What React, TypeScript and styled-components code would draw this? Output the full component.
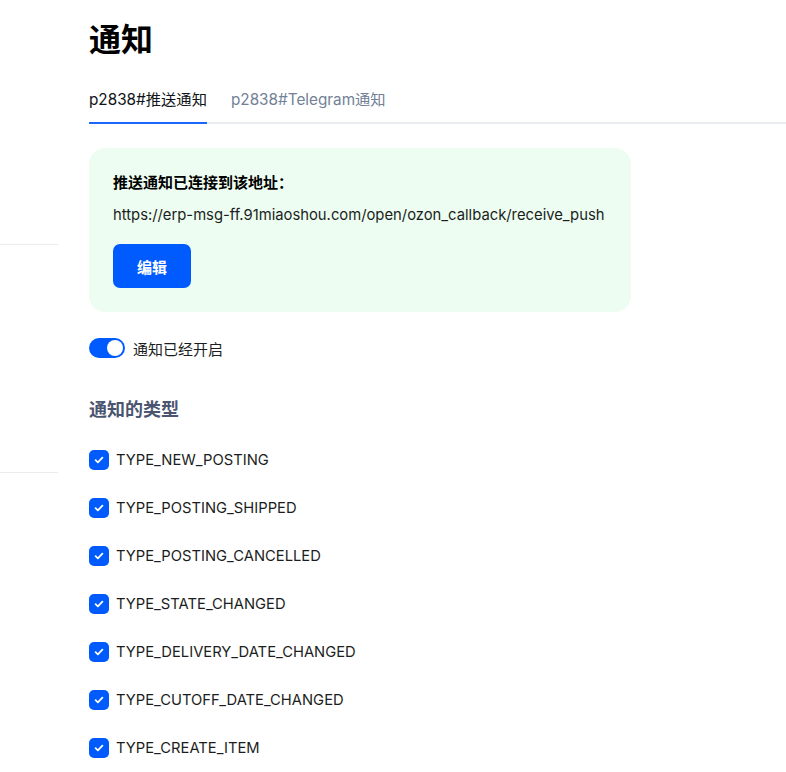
import { createGlobalStyle, styled } from 'styled-components';

const types = [
  'TYPE_NEW_POSTING',
  'TYPE_POSTING_SHIPPED',
  'TYPE_POSTING_CANCELLED',
  'TYPE_STATE_CHANGED',
  'TYPE_DELIVERY_DATE_CHANGED',
  'TYPE_CUTOFF_DATE_CHANGED',
  'TYPE_CREATE_ITEM',
];

export default function App() {
  return (
    <>
      <GlobalStyle />
      <Layout>
        <Sidebar>
          <SideBlock $height={245} />
          <SideBlock $height={228} />
        </Sidebar>
        <Main>
          <Title>通知</Title>
          <Tabs>
            <Tab $active>p2838#推送通知</Tab>
            <Tab>p2838#Telegram通知</Tab>
          </Tabs>
          <Card>
            <CardTitle>推送通知已连接到该地址：</CardTitle>
            <Url>https://erp-msg-ff.91miaoshou.com/open/ozon_callback/receive_push</Url>
            <Button>编辑</Button>
          </Card>
          <ToggleRow>
            <Toggle>
              <Knob />
            </Toggle>
            <span>通知已经开启</span>
          </ToggleRow>
          <SectionTitle>通知的类型</SectionTitle>
          <CheckList>
            {types.map((t) => (
              <CheckRow key={t}>
                <CheckBox>
                  <svg width="12" height="12" viewBox="0 0 12 12" fill="none">
                    <path
                      d="M2.6 6.2l2.3 2.2 4.5-4.7"
                      stroke="#fff"
                      strokeWidth="1.8"
                      strokeLinecap="round"
                      strokeLinejoin="round"
                    />
                  </svg>
                </CheckBox>
                <span>{t}</span>
              </CheckRow>
            ))}
          </CheckList>
        </Main>
      </Layout>
    </>
  );
}

const GlobalStyle = createGlobalStyle`
  body {
    margin: 0;
    background: #fff;
    font-family: Inter, 'Noto Sans CJK SC', sans-serif;
    color: #1b1d21;
  }
`;

const Layout = styled.div`
  display: flex;
  min-height: 772px;
  overflow: hidden;
`;

const Sidebar = styled.div`
  width: 58px;
  flex-shrink: 0;
`;

const SideBlock = styled.div<{ $height: number }>`
  height: ${(p) => p.$height}px;
  border-bottom: 1px solid #ececec;
  box-sizing: border-box;
`;

const Main = styled.div`
  flex: 1;
  margin-left: 31px;
  padding-top: 20px;
`;

const Title = styled.h1`
  margin: 0;
  font-size: 32px;
  line-height: 40px;
  font-weight: 700;
  color: #000;
`;

const Tabs = styled.div`
  display: flex;
  gap: 24px;
  margin-top: 30px;
  border-bottom: 2px solid #e9ecf1;
`;

const Tab = styled.div<{ $active?: boolean }>`
  font-size: 15.3px;
  line-height: 20px;
  padding-bottom: 12px;
  margin-bottom: -2px;
  color: ${(p) => (p.$active ? '#101418' : '#728196')};
  border-bottom: 2px solid ${(p) => (p.$active ? '#1a66ff' : 'transparent')};
`;

const Card = styled.div`
  width: 542px;
  box-sizing: border-box;
  margin-top: 24px;
  padding: 25px 24px 24px;
  background: #edfdf1;
  border-radius: 16px;
`;

const CardTitle = styled.div`
  font-size: 15px;
  line-height: 20px;
  font-weight: 700;
  color: #000;
`;

const Url = styled.div`
  margin-top: 12px;
  font-size: 14.8px;
  line-height: 20px;
  white-space: nowrap;
  color: #1b1d21;
`;

const Button = styled.button`
  margin-top: 19px;
  width: 78px;
  height: 44px;
  border: none;
  border-radius: 7px;
  background: #005bff;
  color: #fff;
  font-family: inherit;
  font-size: 15px;
  font-weight: 700;
  display: block;
`;

const ToggleRow = styled.div`
  display: flex;
  align-items: center;
  gap: 8px;
  margin-top: 26px;
  height: 20px;
  font-size: 15px;
  color: #1b1d21;
`;

const Toggle = styled.div`
  width: 36px;
  height: 20px;
  border-radius: 10px;
  background: #005bff;
  display: flex;
  align-items: center;
  justify-content: flex-end;
  padding: 0 2px;
  box-sizing: border-box;
`;

const Knob = styled.div`
  width: 16px;
  height: 16px;
  border-radius: 50%;
  background: #fff;
`;

const SectionTitle = styled.h2`
  margin: 40px 0 0;
  font-size: 18px;
  line-height: 24px;
  font-weight: 700;
  color: #4a5670;
`;

const CheckList = styled.div`
  display: flex;
  flex-direction: column;
  gap: 28px;
  margin-top: 28px;
`;

const CheckRow = styled.div`
  display: flex;
  align-items: center;
  gap: 7px;
  height: 20px;
  font-size: 14.75px;
  color: #1b1d21;
`;

const CheckBox = styled.div`
  width: 20px;
  height: 20px;
  border-radius: 5px;
  background: #005bff;
  display: flex;
  align-items: center;
  justify-content: center;
`;
